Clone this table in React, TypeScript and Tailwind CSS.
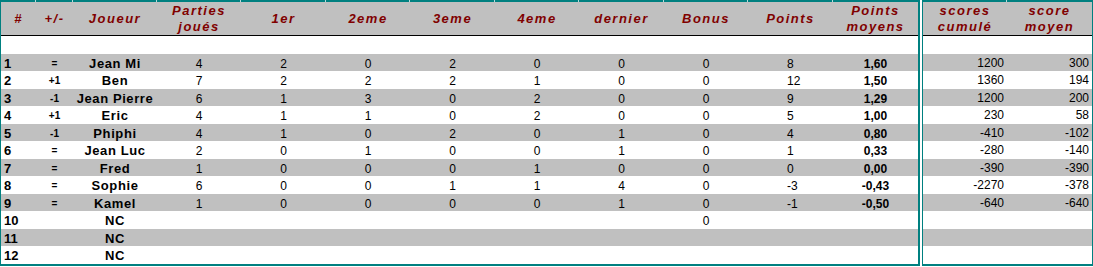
const COLS = 'grid grid-cols-[35px_37px_84px_84px_85px_84px_85px_84px_85px_84px_85px_85px]'
const COLS2 = 'grid grid-cols-[84px_85px]'

const HEADERS = [
  ['#'],
  ['+/-'],
  ['Joueur'],
  ['Parties', 'joués'],
  ['1er'],
  ['2eme'],
  ['3eme'],
  ['4eme'],
  ['dernier'],
  ['Bonus'],
  ['Points'],
  ['Points', 'moyens'],
]

const HEADERS2 = [
  ['scores', 'cumulé'],
  ['score', 'moyen'],
]

type Row = {
  rank: number
  move: string
  name: string
  stats: string[]
  points: string
  avg: string
  total: string
  mean: string
}

const ROWS: Row[] = [
  { rank: 1, move: '=', name: 'Jean Mi', stats: ['4', '2', '0', '2', '0', '0', '0'], points: '8', avg: '1,60', total: '1200', mean: '300' },
  { rank: 2, move: '+1', name: 'Ben', stats: ['7', '2', '2', '2', '1', '0', '0'], points: '12', avg: '1,50', total: '1360', mean: '194' },
  { rank: 3, move: '-1', name: 'Jean Pierre', stats: ['6', '1', '3', '0', '2', '0', '0'], points: '9', avg: '1,29', total: '1200', mean: '200' },
  { rank: 4, move: '+1', name: 'Eric', stats: ['4', '1', '1', '0', '2', '0', '0'], points: '5', avg: '1,00', total: '230', mean: '58' },
  { rank: 5, move: '-1', name: 'Phiphi', stats: ['4', '1', '0', '2', '0', '1', '0'], points: '4', avg: '0,80', total: '-410', mean: '-102' },
  { rank: 6, move: '=', name: 'Jean Luc', stats: ['2', '0', '1', '0', '0', '1', '0'], points: '1', avg: '0,33', total: '-280', mean: '-140' },
  { rank: 7, move: '=', name: 'Fred', stats: ['1', '0', '0', '0', '1', '0', '0'], points: '0', avg: '0,00', total: '-390', mean: '-390' },
  { rank: 8, move: '=', name: 'Sophie', stats: ['6', '0', '0', '1', '1', '4', '0'], points: '-3', avg: '-0,43', total: '-2270', mean: '-378' },
  { rank: 9, move: '=', name: 'Kamel', stats: ['1', '0', '0', '0', '0', '1', '0'], points: '-1', avg: '-0,50', total: '-640', mean: '-640' },
  { rank: 10, move: '', name: 'NC', stats: ['', '', '', '', '', '', '0'], points: '', avg: '', total: '', mean: '' },
  { rank: 11, move: '', name: 'NC', stats: ['', '', '', '', '', '', ''], points: '', avg: '', total: '', mean: '' },
  { rank: 12, move: '', name: 'NC', stats: ['', '', '', '', '', '', ''], points: '', avg: '', total: '', mean: '' },
]

const rowBg = (i: number) => (i % 2 === 0 ? 'bg-[#c0c0c0] h-[17px]' : 'bg-white h-[18px]')

function TopBar({ cols, count }: { cols: string; count: number }) {
  return (
    <div className={`${cols} h-[2px]`}>
      {Array.from({ length: count }).map((_, i) => (
        <div
          key={i}
          className={`bg-[#008080] ${i < count - 1 ? 'border-r border-[#b9dada]' : ''}`}
        />
      ))}
    </div>
  )
}

function HeaderRow({ cols, headers }: { cols: string; headers: string[][] }) {
  return (
    <>
      <div className={`${cols} h-[33px] bg-[#c0c0c0] border-b border-black box-content`}>
        {headers.map((lines, i) => (
          <div
            key={i}
            className="flex flex-col items-center justify-center text-[13px] leading-[16px] font-bold italic tracking-[1.5px] text-[#800000]"
          >
            {lines.map((l) => (
              <span key={l}>{l}</span>
            ))}
          </div>
        ))}
      </div>
      {/* blank line under the header */}
      <div className="h-[18px] bg-white" />
    </>
  )
}

export default function App() {
  return (
    <div className="flex w-[1093px] h-[267px] bg-white text-black font-['Liberation_Sans',Arial,sans-serif]">
      {/* Main ranking table */}
      <div className="w-[920px] border-l border-r-2 border-b-2 border-[#008080] self-start">
        <TopBar cols={COLS} count={12} />
        <HeaderRow cols={COLS} headers={HEADERS} />
        {ROWS.map((r, i) => (
          <div key={r.rank} className={`${COLS} ${rowBg(i)} items-center text-[12px]`}>
            <div className="pl-[3px] text-[13px] font-bold">{r.rank}</div>
            <div className="text-center text-[10px] font-bold">{r.move}</div>
            <div className="text-center text-[13px] font-bold tracking-[0.6px]">{r.name}</div>
            {r.stats.map((s, j) => (
              <div key={j} className="text-center">{s}</div>
            ))}
            <div className="pl-[39px]">{r.points}</div>
            <div className="text-center font-bold">{r.avg}</div>
          </div>
        ))}
      </div>

      {/* Cumulated scores */}
      <div className="ml-[2px] w-[171px] border-l border-r border-b-2 border-[#008080] self-start">
        <TopBar cols={COLS2} count={2} />
        <HeaderRow cols={COLS2} headers={HEADERS2} />
        {ROWS.map((r, i) => (
          <div key={r.rank} className={`${COLS2} ${rowBg(i)} items-center text-[12px]`}>
            <div className="text-right pr-[3px]">{r.total}</div>
            <div className="text-right pr-[3px]">{r.mean}</div>
          </div>
        ))}
      </div>
    </div>
  )
}
